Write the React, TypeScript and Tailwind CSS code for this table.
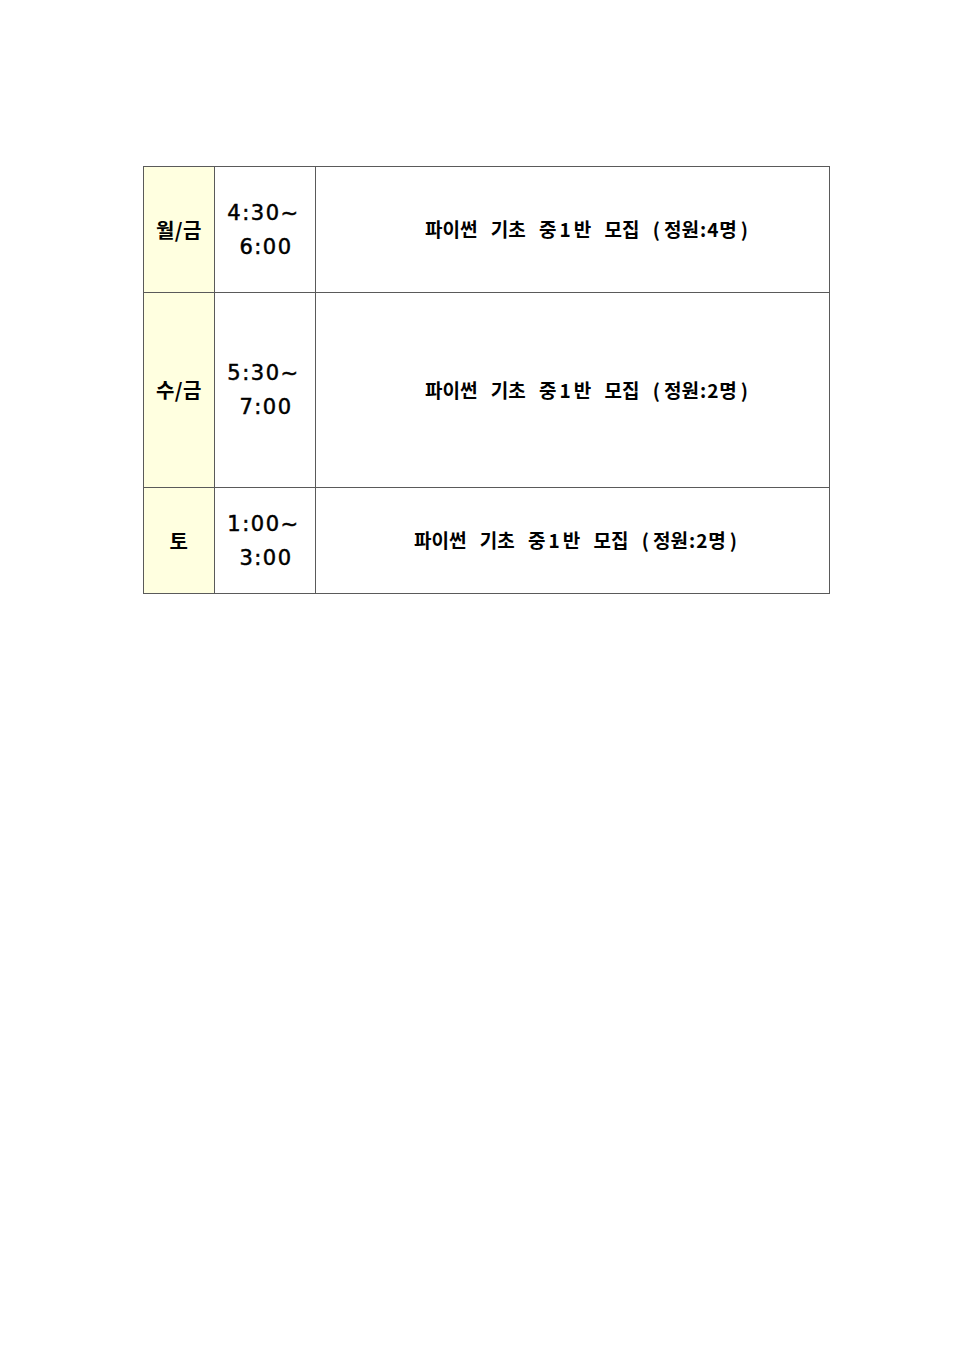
const rows = [
  { day: "월/금", from: "4:30~", to: "6:00", n: "4", h: "h-[126px]", pad: "pl-[28px]" },
  { day: "수/금", from: "5:30~", to: "7:00", n: "2", h: "h-[195px]", pad: "pl-[28px]" },
  { day: "토", from: "1:00~", to: "3:00", n: "2", h: "h-[106px]", pad: "pl-[6px]" },
];

export default function App() {
  return (
    <div className="min-h-[1366px] w-[966px] bg-white pl-[143px] pt-[166px] font-['Noto_Sans_CJK_KR',sans-serif] text-black">
      <table className="w-[687px] border-collapse">
        <tbody>
          {rows.map((r, i) => (
            <tr key={i} className={r.h}>
              <td className="w-[71px] border border-[#5a5a5a] bg-[#ffffe0] text-center text-[20px] font-bold tracking-[0.5px]">
                {r.day}
              </td>
              <td className="w-[101px] border border-[#5a5a5a] text-center font-['DejaVu_Sans',sans-serif] text-[21px] leading-[34px] tracking-[1.5px] [-webkit-text-stroke:0.5px_black]">
                <div className="pr-[3px]">{r.from}</div>
                <div className="pl-[2px]">{r.to}</div>
              </td>
              <td
                className={`border border-[#5a5a5a] text-center text-[19px] font-bold [word-spacing:9px] ${r.pad}`}
              >
                파이썬 기초 중<span className="px-[3px]">1</span>반 모집 <span className="mr-[4px]">(</span>정원<span className="px-[1px]">:</span>
                <span className="pr-[1px]">{r.n}</span>명<span className="ml-[4px]">)</span>
              </td>
            </tr>
          ))}
        </tbody>
      </table>
    </div>
  );
}
